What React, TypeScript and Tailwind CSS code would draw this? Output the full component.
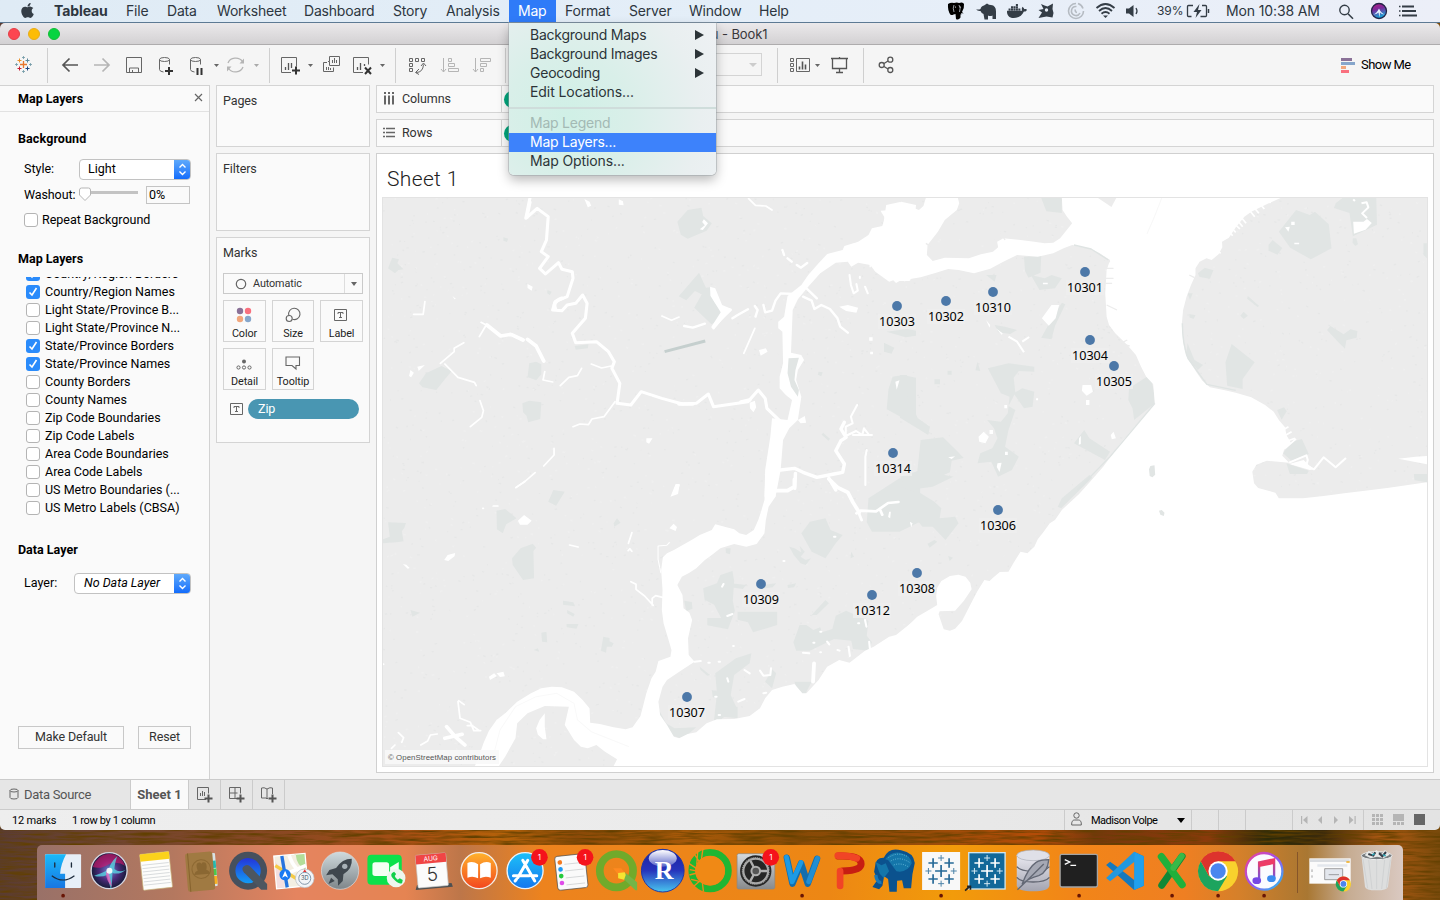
import React from "react";
import type { ReactNode } from "react";
import { FaApple, FaDocker } from "react-icons/fa";

/* ---------- shared helpers ---------- */

// A drawing cell whose coordinates are window coordinates.
function Cell({ x, w, y = 45, h = 39, children }: { x: number; w: number; y?: number; h?: number; children?: ReactNode }) {
  return (
    <svg className="block shrink-0" width={w} height={h} viewBox={`${x} ${y} ${w} ${h}`} fill="none">
      {children}
    </svg>
  );
}

const Caret = ({ x, c = "#666" }: { x: number; c?: string }) => <path d={`M${x} 64h5l-2.5 3z`} fill={c} />;
const Sep = ({ x }: { x: number }) => <path d={`M${x + 0.5} 48v35`} stroke="#cfcfcf" />;

/* ---------- menu bar ---------- */

const menus: [string, string][] = [
  ["File", "w-[41px]"],
  ["Data", "w-[50px]"],
  ["Worksheet", "w-[87px]"],
  ["Dashboard", "w-[89px]"],
  ["Story", "w-[53px]"],
  ["Analysis", "w-[63px]"],
];
const menusRight: [string, string][] = [
  ["Format", "w-[64px]"],
  ["Server", "w-[60px]"],
  ["Window", "w-[70px]"],
  ["Help", "w-[40px]"],
];

function MenuBar() {
  return (
    <div className="flex h-[23px] w-full items-center border-b border-[#5d7a94] bg-linear-to-r from-[#dfebf5] via-[#e4eef8] to-[#eceff8] text-[14px] leading-[22px] tracking-[-0.200px] whitespace-nowrap text-[#2d3640]">
      <div className="flex w-[54px] pl-[19px]">
        <FaApple className="mb-[2px] h-[17px] w-[17px] text-[#343d46]" />
      </div>
      <div className="w-[72px] font-bold tracking-[-0.100px]">Tableau</div>
      {menus.map(([t, w]) => (
        <div key={t} className={w}>{t}</div>
      ))}
      <div className="h-[22px] w-[47px] bg-[#2f7bf8] pl-[9px] text-white">Map</div>
      <div className="w-[9px]" />
      {menusRight.map(([t, w]) => (
        <div key={t} className={w}>{t}</div>
      ))}
      <div className="w-[146px]" />
      <Cell x={945} w={30} y={0} h={22}>
        <path d="M948 4q3-2 6-1 3-1 5 0 4-1.500 5 1 .5 4-2 8l1.500 1.500-3 1 0 3q-2 3-4.500 1.500l-.5-5-2 .5q-1.500 1-3 .2-3-4-2.500-10.700z" fill="#000" />
        <path d="M954 5q-1.500 3 0 7M959 5q2 3 .5 7M961 13.500h2" stroke="#dfe8f2" strokeWidth=".7" />
        <circle cx="955.500" cy="7" r=".6" fill="#fff" />
        <circle cx="960.500" cy="7" r=".6" fill="#fff" />
      </Cell>
      <Cell x={975} w={32} y={0} h={22}>
        <path d="M976 9q2 1 4.500 0 .5-3 3.500-3.500l3-2q2 1.500 4 1.500 5 .5 5 6.500v7.500h-3.500v-3.500q-2.500 1-4.500 0v4h-3.500l-1-5.500q-2-.5-3-3-3 .5-4.500-2z" fill="#343d46" />
      </Cell>
      <FaDocker className="h-[20px] w-[20px] text-[#343d46]" />
      <Cell x={1027} w={68} y={0} h={22}>
        <path d="M1041 4l3.500 1.500 3 1 5.500-3-.5 5.500 1 4-1 4.500-6-1-8 1.500 3.500-5.500-3.500-2.500 5-1z" fill="#343d46" />
        <circle cx="1046.500" cy="10" r="1.700" fill="#e8eef7" />
        <path d="M1076 3.500a7.500 7.500 0 1 0 7.500 7.500M1076.500 6.500a4.500 4.500 0 1 0 3.500 6.500M1078 3.500a8 8 0 0 1 5 5M1075.500 9.500a2 2 0 0 0 1.500 3" stroke="#b5bbc2" strokeWidth="1.600" />
      </Cell>
      <Cell x={1095} w={62} y={0} h={22}>
        <path d="M1096.500 8q9-8 18 0M1099 11q6.500-6 13 0M1101.500 13.800q4-3.500 8 0" stroke="#343d46" strokeWidth="1.800" />
        <path d="M1103 15.500h5l-2.500 2.600z" fill="#343d46" />
        <path d="M1126 8.500h3l4.500-3.500v12l-4.500-3.500h-3z" fill="#343d46" />
        <path d="M1136 8q2 3 0 6" stroke="#343d46" strokeWidth="1.300" />
      </Cell>
      <div className="w-[28px] text-[12px] tracking-[-0.100px]">39%</div>
      <Cell x={1185} w={41} y={0} h={22}>
        <path d="M1193 5.500h-4.500q-1 0-1 1v9q0 1 1 1h3M1202 5.500h3.500q1 0 1 1v9q0 1-1 1h-5" stroke="#343d46" strokeWidth="1.300" />
        <path d="M1199.500 4l-6 8h3.500l-1.500 6 6-8h-3.500z" fill="#343d46" />
        <path d="M1208.500 9v4" stroke="#343d46" strokeWidth="1.500" />
      </Cell>
      <div className="w-[112px] tracking-[-0.130px]">Mon 10:38 AM</div>
      <Cell x={1338} w={100} y={0} h={22}>
        <circle cx="1344.500" cy="10" r="4.700" stroke="#343d46" strokeWidth="1.400" />
        <path d="M1348 13.700l5 5" stroke="#343d46" strokeWidth="1.600" />
        <defs>
          <linearGradient id="siriM" x1="0" y1="0" x2="0.3" y2="1">
            <stop offset="0" stopColor="#c01c82" />
            <stop offset=".45" stopColor="#7a2a9a" />
            <stop offset="1" stopColor="#17a5d8" />
          </linearGradient>
        </defs>
        <circle cx="1379" cy="11" r="7.500" fill="url(#siriM)" stroke="#232348" strokeWidth="1.300" />
        <path d="M1373.500 14.500q3-1 5.500-6 2 4.500 5.500 6-3 0-4.500-2l-.5 5-1-5q-2 2-5 2z" fill="#e4f2ff" />
        <path d="M1399 6.500h1.500M1399 11h1.500M1399 15.500h1.500" stroke="#343d46" strokeWidth="1.600" />
        <path d="M1402 6.500h12M1402 11h14M1402 15.500h15" stroke="#343d46" strokeWidth="1.800" />
      </Cell>
    </div>
  );
}

/* ---------- toolbar ---------- */

const plusMark = (cx: number, cy: number) => <path d={`M${cx - 4} ${cy}h8M${cx} ${cy - 4}v8`} stroke="#333" strokeWidth="2" />;

function Toolbar() {
  return (
    <div className="flex h-[40px] w-full bg-[#f5f5f5] font-['Roboto',sans-serif]">
      <Cell x={0} w={56}>
        <path d="M20 64.500h7M23.500 61v7" stroke="#e8762c" strokeWidth="1.300" />
        <path d="M17.500 60.500h4M19.500 58.500v4" stroke="#eb912b" />
        <path d="M25.500 60.500h4M27.500 58.500v4" stroke="#5b879b" />
        <path d="M17.500 68.500h4M19.500 66.500v4" stroke="#c72035" />
        <path d="M25.500 68.500h4M27.500 66.500v4" stroke="#1f457e" />
        <path d="M22 57.500h3M23.500 56v3M22 71.500h3M23.500 70v3M15 64.500h3M16.500 63v3M29 64.500h3M30.500 63v3" stroke="#7199a6" strokeWidth=".8" />
        <Sep x={47} />
      </Cell>
      <Cell x={56} w={94}>
        <path d="M78 65H63.500M69.500 58.500L63 65l6.500 6.500" stroke="#555" strokeWidth="1.700" />
        <path d="M94 65h14.500M102.500 58.500L109 65l-6.500 6.500" stroke="#b5b5b5" strokeWidth="1.700" />
        <path d="M126.500 57.500h15v15h-15zM129.500 72v-4h9v4M132.500 72v-2" stroke="#666" />
      </Cell>
      <Cell x={150} w={70}>
        {[159.5, 190.5].map((x) => (
          <path key={x} d={`M${x} 59.500q0-2 5-2t5 2q0 2-5 2t-5-2v10q0 2 4 2.500M${x + 10} 59.500v5`} stroke="#666" />
        ))}
        {plusMark(169, 71)}
        <path d="M197.500 68v7M201.500 68v7" stroke="#333" strokeWidth="2" />
        <Caret x={214} />
      </Cell>
      <Cell x={220} w={50}>
        <path d="M228 63a8 7 0 0 1 14.500-1.500M243 67a8 7 0 0 1-14.500 1.500" stroke="#b5b5b5" strokeWidth="1.300" />
        <path d="M239.500 63.500h4.500v-5zM231.500 66.500h-4.500v5z" fill="#b5b5b5" />
        <Caret x={254} c="#aaa" />
        <Sep x={269} />
      </Cell>
      <Cell x={270} w={126}>
        <path d="M291 72.500h-9.500v-15h15v9" stroke="#666" />
        <path d="M285.500 70v-3M288.500 70v-7M291.500 68v-5" stroke="#555" strokeWidth="1.300" />
        {plusMark(296, 70.5)}
        <Caret x={308} />
        <path d="M328 61.500h1.500v-5h10v9h-10v-4M327 62.500h-3.500v9h10v-4M332.500 63v-3M334.500 63v-5M336.500 63v-3M326.500 70v-3M328.500 70v-3M330.500 70v-2" stroke="#666" />
        <path d="M363 72.500h-9.500v-15h15v7" stroke="#666" />
        <path d="M357.500 70v-3M360.500 70v-7M364.500 66v-2" stroke="#555" strokeWidth="1.300" />
        <path d="M365 67.500l6 6.500M371 67.500l-6 6.500" stroke="#333" strokeWidth="2" />
        <Caret x={380} />
        <Sep x={395} />
      </Cell>
      <Cell x={396} w={110}>
        <path d="M409.500 58.500h3v3h-3zM415.500 58.500h3v3h-3zM421.500 58.500h3v3h-3zM409.500 63.500h3v3h-3zM409.500 68.500h3v3h-3zM416 72.500q7 0 7.500-8M419 69l-3.500 3.500 3.500 2M421 66l2.500-3 2.500 3" stroke="#666" />
        <path d="M443.500 58v14M441 69l2.500 3 2.500-3M448.500 58.500h3v3h-3zM448.500 63.500h6v3h-6zM448.500 68.500h10v3h-10z" stroke="#b5b5b5" />
        <path d="M475.500 58v14M473 69l2.500 3 2.500-3M480.500 58.500h10v3h-10zM480.500 63.500h6v3h-6zM480.500 68.500h3v3h-3z" stroke="#b5b5b5" />
        <Sep x={505} />
      </Cell>
      <div className="w-[155px]" />
      <div className="mt-[8px] flex h-[23px] w-[101px] border border-[#d4d4d4]">
        <span className="ml-auto mt-[9px] mr-[4px] h-0 w-0 border-x-4 border-t-4 border-x-transparent border-t-[#ccc]" />
      </div>
      <Cell x={762} w={102}>
        <Sep x={777} />
        <path d="M790.500 58.500h3v3h-3zM790.500 63.500h3v3h-3zM790.500 68.500h3v3h-3zM796.500 58.500h13v13h-13z" stroke="#666" />
        <path d="M799.500 69.500v-3M802.500 69.500v-8M805.500 69.500v-5" stroke="#555" strokeWidth="1.600" />
        <Caret x={815} />
        <path d="M831 58.500h17M832.500 59v9.500h14V59M839.500 69v3M836 72.500h7M839.500 57v1" stroke="#555" strokeWidth="1.300" />
        <Sep x={863} />
      </Cell>
      <Cell x={864} w={40}>
        <path d="M884 63.500l4-2.500M884 66.500l4 2.500" stroke="#555" strokeWidth="1.300" />
        <circle cx="881.700" cy="65" r="2.500" stroke="#555" strokeWidth="1.300" />
        <circle cx="890.300" cy="59.700" r="2.500" stroke="#555" strokeWidth="1.300" />
        <circle cx="890.300" cy="70" r="2.500" stroke="#555" strokeWidth="1.300" />
      </Cell>
      <div className="ml-auto flex w-[99px] items-center text-[13px] tracking-[-0.550px] text-black">
        <span className="flex w-[20px] flex-col gap-px">
          <i className="h-[3px] w-[11px] bg-[#8a7197]" />
          <i className="h-[3px] w-[14px] bg-[#86a6cb]" />
          <i className="h-[3px] w-[5px] bg-[#f1a67c]" />
          <i className="h-[3px] w-[8px] bg-[#f9707e]" />
        </span>
        Show Me
      </div>
    </div>
  );
}

/* ---------- map layers panel ---------- */

const layers: [string, boolean][] = [
  ["Country/Region Borders", true],
  ["Country/Region Names", true],
  ["Light State/Province B...", false],
  ["Light State/Province N...", false],
  ["State/Province Borders", true],
  ["State/Province Names", true],
  ["County Borders", false],
  ["County Names", false],
  ["Zip Code Boundaries", false],
  ["Zip Code Labels", false],
  ["Area Code Boundaries", false],
  ["Area Code Labels", false],
  ["US Metro Boundaries (...", false],
  ["US Metro Labels (CBSA)", false],
];

function Check({ on }: { on: boolean }) {
  return on ? (
    <span className="flex h-[14px] w-[14px] items-center justify-center rounded-[3px] bg-[#2a8bfb]">
      <svg width="10" height="10" viewBox="0 0 10 10" fill="none">
        <path d="M1.500 5.500L4 8l4.500-7" stroke="#fff" strokeWidth="1.600" />
      </svg>
    </span>
  ) : (
    <span className="h-[14px] w-[14px] rounded-[3px] border border-[#b4b4b4] bg-white" />
  );
}

function Popup({ children, wide }: { children: ReactNode; wide?: boolean }) {
  return (
    <div className={`flex h-[21px] items-center overflow-hidden rounded-[4px] border border-[#c2c2c2] bg-white ${wide ? "w-[117px] pl-[9px]" : "w-[112px] pl-[8px]"}`}>
      <span className="grow">{children}</span>
      <span className="-my-px -mr-px flex h-[21px] w-[17px] items-center justify-center bg-linear-to-b from-[#62acfb] to-[#0c68fb]">
        <svg width="9" height="13" viewBox="0 0 9 13" fill="none">
          <path d="M1.500 4.500l3-3 3 3M1.500 8.500l3 3 3-3" stroke="#fff" strokeWidth="1.400" />
        </svg>
      </span>
    </div>
  );
}

function LayersPanel() {
  return (
    <div className="flex w-[210px] flex-col border-t border-r border-[#d2d2d2] bg-[#fafafa] text-[12.500px] leading-4 whitespace-nowrap text-black">
      <div className="flex h-[26px] items-center border-b border-[#e2e2e2] pl-[18px]">
        <b className="grow font-bold">Map Layers</b>
        <svg className="mr-[6px] mb-[2px]" width="9" height="9" viewBox="0 0 9 9">
          <path d="M1 1l7 7M8 1L1 8" stroke="#666" strokeWidth="1.200" />
        </svg>
      </div>
      <b className="mt-[19px] h-4 pl-[18px] tracking-[0.100px]">Background</b>
      <div className="mt-[11px] flex h-[22px] items-center pl-[24px]">
        <span className="w-[55px]">Style:</span>
        <Popup>Light</Popup>
      </div>
      <div className="mt-[5px] flex h-[20px] items-center pl-[24px]">
        <span className="w-[55px] tracking-[-0.100px]">Washout:</span>
        <svg width="60" height="16" viewBox="0 0 60 16">
          <path d="M8 5.500h51" stroke="#c3c3c3" strokeWidth="3" />
          <path d="M.5 3q0-2 2-2h7q2 0 2 2v5L6 13.500.5 8z" fill="#fff" stroke="#b5b5b5" />
        </svg>
        <span className="ml-[7px] h-[18px] w-[44px] border border-[#c4c4c4] pl-[2px]">0%</span>
      </div>
      <div className="mt-[6px] flex h-[18px] items-center gap-[4px] pl-[24px]">
        <Check on={false} />
        Repeat Background
      </div>
      <b className="mt-[22px] h-4 pl-[18px]">Map Layers</b>
      <div className="mt-[10px] h-[240px] overflow-hidden">
        <div className="-mt-[12px] pl-[26px]">
          {layers.map(([t, on]) => (
            <div key={t} className="flex h-[18px] items-center gap-[5px]">
              <Check on={on} />
              {t}
            </div>
          ))}
        </div>
      </div>
      <b className="mt-[25px] h-4 pl-[18px]">Data Layer</b>
      <div className="mt-[14px] flex h-[22px] items-center pl-[24px]">
        <span className="w-[50px]">Layer:</span>
        <Popup wide>
          <i>No Data Layer</i>
        </Popup>
      </div>
      <div className="mt-[132px] flex gap-[14px] pl-[18px] leading-[20px] tracking-[-0.150px] text-[#333]">
        <div className="h-[23px] w-[106px] border border-[#c8c8c8] text-center">Make Default</div>
        <div className="h-[23px] w-[53px] border border-[#c8c8c8] text-center">Reset</div>
      </div>
    </div>
  );
}

/* ---------- marks ---------- */

function TBox() {
  return (
    <svg width="13" height="12" viewBox="0 0 13 12" fill="none">
      <path d="M.5.500h12v11H.5zM4 5V3.500h5V5M6.500 3.500v5M5 8.500h3" stroke="#666" />
    </svg>
  );
}

function MarkButton({ label, children }: { label: string; children: ReactNode }) {
  return (
    <div className="flex h-[42px] w-full flex-col items-center border border-[#d4d4d4] bg-[#fafafa] text-[10.800px] leading-3 text-[#222]">
      <div className="flex h-[27px] items-center">{children}</div>
      {label}
    </div>
  );
}

function Cards() {
  return (
    <div className="ml-[6px] flex w-[154px] flex-col gap-[6px] text-[12.500px] leading-4 tracking-[-0.100px] text-[#333]">
      <div className="h-[62px] border border-[#d4d4d4] bg-[#fafafa] pt-[7px] pl-[6px]">Pages</div>
      <div className="h-[78px] border border-[#d4d4d4] bg-[#fafafa] pt-[7px] pl-[6px]">Filters</div>
      <div className="h-[206px] border border-[#d4d4d4] bg-[#fafafa] px-[6px] pt-[7px]">
        Marks
        <div className="mt-[12px] flex h-[21px] w-[140px] items-center border border-[#cacaca] text-[10.800px] leading-[19px]">
          <svg className="ml-[11px]" width="12" height="12" viewBox="0 0 12 12">
            <circle cx="6" cy="6" r="4.700" fill="none" stroke="#666" strokeWidth="1.200" />
          </svg>
          <span className="ml-[6px] grow pb-px">Automatic</span>
          <span className="flex h-full w-[18px] items-center justify-center border-l border-[#ddd]">
            <i className="h-0 w-0 border-x-[3.500px] border-t-4 border-x-transparent border-t-[#666]" />
          </span>
        </div>
        <div className="mt-[6px] grid w-[140px] grid-cols-[43px_42px_43px] gap-[6px]">
          <MarkButton label="Color">
            <svg className="-ml-[2px]" width="16" height="16" viewBox="0 0 16 16">
              <circle cx="4" cy="4" r="3.200" fill="#8a7197" />
              <circle cx="12" cy="4" r="3.200" fill="#f9707e" />
              <circle cx="4" cy="12" r="3.200" fill="#f1a67c" />
              <circle cx="12" cy="12" r="3.200" fill="#86a6cb" />
            </svg>
          </MarkButton>
          <MarkButton label="Size">
            <svg width="16" height="16" viewBox="0 0 16 16" fill="none" stroke="#666" strokeWidth="1.100">
              <path d="M3.800 8.300A5.700 5.700 0 1 1 7.500 12.300" />
              <circle cx="4.200" cy="11.500" r="3" />
            </svg>
          </MarkButton>
          <MarkButton label="Label">
            <span className="-ml-[2px]"><TBox /></span>
          </MarkButton>
          <MarkButton label="Detail">
            <svg className="mt-1 -ml-px" width="16" height="12" viewBox="0 0 16 12" fill="none" stroke="#666">
              <circle cx="8" cy="2.500" r="2" fill="#666" stroke="none" />
              <circle cx="2.500" cy="8.500" r="1.600" />
              <circle cx="8" cy="8.500" r="1.600" />
              <circle cx="13.500" cy="8.500" r="1.600" />
            </svg>
          </MarkButton>
          <MarkButton label="Tooltip">
            <svg className="mt-px" width="16" height="15" viewBox="0 0 16 15" fill="none" stroke="#666" strokeWidth="1.100">
              <path d="M1 1h13.500v8.500h-3.500v3.500l-4-3.500H1z" />
            </svg>
          </MarkButton>
        </div>
        <div className="mt-[9px] flex items-center pl-[7px]">
          <TBox />
          <span className="ml-[5px] h-[20px] w-[111px] rounded-full bg-[#4996b2] pl-[10px] leading-[19px] text-white">Zip</span>
        </div>
      </div>
    </div>
  );
}

/* ---------- map ---------- */

function speckles(count: number, seed: number) {
  let s = seed;
  const next = () => {
    s = (s * 1103515245 + 12345) % 2147483648;
    return s / 2147483648;
  };
  let d = "";
  for (let i = 0; i < count; i++) {
    const x = 383 + next() * 1044;
    const y = 198 + next() * 568;
    d += `M${x.toFixed(1)} ${y.toFixed(1)}l${(next() * 2 + 0.5).toFixed(1)} ${(next() * 2 - 1).toFixed(1)}`;
  }
  return d;
}
const darkSpeck = speckles(2200, 7);
const lightSpeck = speckles(1500, 91);

const zips: [string, number, number][] = [
  ["10303", 897, 306],
  ["10302", 946, 301],
  ["10310", 993, 292],
  ["10301", 1085, 272],
  ["10304", 1090, 340],
  ["10305", 1114, 366],
  ["10314", 893, 453],
  ["10306", 998, 510],
  ["10308", 917, 573],
  ["10309", 761, 584],
  ["10312", 872, 595],
  ["10307", 687, 697],
];

// Map tiles are drawn on a finer grid than the view; one scale per axis.
const TILE = "scale(.34439 .33333)";

// Shorelines as point lists: upper bay with the open ocean, then the two banks of the kill.
const bay =
  "470,24 472,60 485,80 500,100 480,125 465,145 445,158 420,160 390,155 350,150 300,145 282,155 285,172 270,185 235,193 200,205 130,203 95,213 78,195 80,165 110,125 130,90 165,60 172,40 168,24 75,24 68,48 55,60 30,50 0,36 -40,45 -60,180 -30,262 0,272 60,262 100,250 140,237 170,240 215,250 262,236 300,215 340,195 400,200 445,190 475,175 500,165 520,170 550,175 580,190 610,210 600,240 596,310 600,380 607,405 625,430 660,465 685,495 700,530 715,560 735,582 740,640 690,700 640,760 590,830 552,875 520,912 480,950 470,960 450,990 435,1000 415,1028 400,1048 390,1070 370,1090 350,1085 330,1118 315,1145 290,1146 270,1163 260,1173 245,1170 225,1203 205,1243 180,1293 160,1316 145,1322 127,1318 112,1273 115,1264 160,1262 185,1233 208,1198 204,1178 190,1160 170,1154 145,1158 120,1173 108,1193 105,1218 108,1245 90,1256 50,1280 20,1311 0,1330 0,1760 1535,1760 1535,876 1490,883 1420,893 1350,902 1290,910 1230,918 1170,925 1100,925 1090,908 1040,894 1028,880 1023,845 1035,824 1065,812 1130,818 1110,797 1115,780 1135,758 1122,735 1118,712 1100,690 1085,665 1060,645 1020,622 975,608 940,600 900,592 878,572 860,545 842,515 830,495 822,455 818,405 822,360 832,320 845,285 858,255 858,235 870,215 890,205 905,210 925,193 936,172 935,155 955,143 975,112 1000,80 1020,65 1060,45 1105,24";

const killSouth =
  "1130,-3 1128,60 1118,95 1110,120 1097,150 1075,165 1055,160 1040,148 985,133 975,150 940,165 920,178 865,210 845,220 833,232 828,270 832,330 830,390 835,430 848,475 858,510 855,530 820,543 812,575 800,595 785,640 775,680 768,708 745,742 725,748 690,742 650,732 622,728 620,685 600,660 575,635 540,622 510,620 480,625 450,640 410,665 375,700 350,720 328,752 312,790 300,825 285,864 353,864 375,830 405,775 410,730 440,700 490,678 560,680 548,735 575,780 595,800 615,805 640,795 665,815 700,838 686,866 1568,866 1568,418 1540,440 1510,465 1490,470 1445,500 1420,512 1375,548 1345,540 1310,560 1285,600 1250,640 1238,640 1215,612 1180,620 1150,630 1130,655 1115,685 1085,708 1040,717 990,718 960,730 930,757 905,762 880,775 865,770 845,735 825,705 820,665 832,620 845,600 885,572 925,545 908,525 906,475 918,420 910,398 893,385 890,345 875,315 888,290 910,278 930,265 955,240 975,225 1000,205 1040,192 1075,200 1105,192 1128,160 1132,120 1140,80 1160,50 1162,-3";

function MapView() {
  return (
    <svg className="block" width="1044" height="568" viewBox="383 198 1044 568" strokeLinejoin="round">
      <rect x="383" y="198" width="1044" height="568" fill="#ececec" />
      <path d={darkSpeck} stroke="#e6e7e7" strokeWidth="1.300" fill="none" />
      <path d={lightSpeck} stroke="#efefef" strokeWidth="1.500" fill="none" />

      {/* parks, north-west */}
      <g transform={`translate(376 190) ${TILE}`} fill="#e1e5e4">
        <path d="M875 95L905 60l40-7 5 25 25 22-15 22-55 24-20-12zM938 248l20 45 18-2 10 50 18 20-8 30-22 12-50-50 22-40-20-10-25 28-22-12zM35 235l12-32 20 5-5 12 18 18-15 2-10 10zM125 580l20-30 45-22 30 15-20 25-25 32-40-8zM425 640l20-8 35 5-3 50-35 10-5-20-10-10zM445 520l20-5 15 8v30l-15 18-25-10zM577 468l40-5-2 12-35 4zM498 300l12 5-5 10-8-5zM370 142l14 4-4 10-10-4zM1482 425l60-8 26 5v15l-30 5zM1475 458l30 15-8 18-22-6zM1500 560l30-5 38 8v140l-40-20-45-25 5-60zM1285 545l12 2-4 12-10-5zM1298 728l20 18-4 6-20-18z" />
        <path d="M838 485l118-32" stroke="#c5cfce" strokeWidth="9" />
      </g>
      {/* parks, north-east */}
      <g transform={`translate(900 190) ${TILE}`} fill="#e1e5e4">
        <path d="M410 24l60 0 0 45-45-5zM360 200l50-2-2 50-35 15-10-20zM380 255l40 10 20-10 30 10-20 30-45 5zM470 338l10 5-30 65-10 40-30-5 30-55zM275 405l30 5 35 10-20 12-35-5zM255 535l60-15 75 10 0 15-45-2-15 20 5 45-20 40 20 12-20 60-10 50 40 30-20 40-40 20-20-45-40 5 8-30 35-15 15-30-10-30-20-25 40 5 20-25 5-50-25-10zM330 610l25-15 35 10-5 45-25 5zM0 555l20 0 2 70 30 60 35 25-5 25-82-52zM60 750l65-8 40 40 20 22-35 8-5 35-45 20-50-20zM535 720l15 25 60 40-15 25-90-50zM665 595l60-40 12 45 3 40-60 50-5-35-12-25zM250 255h30l-5 20zM100 568h16v15h-16zM138 542h12v12h-12zM225 515l8 28-14-2zM1100 125l50-65 40 15 15-10 40 38 8 72-60 33-60-35zM1265 40l20-16h98l2 80-70 35-10-70-45-15zM1070 165l12-15 28 24-14 20-26-12zM865 250l20-17 25 8-10 25-30-5zM963 462l67 55-35 50 0 30-45-10-5-70zM1010 318l33 30-5 3-30-25zM998 365l12 12-12 10-10-10zM1240 420l10-12 38 25 20-15 20 5-2 20-30 8-4 25-22-22zM1315 145h10l5 18-8 5-8-10zM1520 160l10 0 0 45-10-10zM835 310l15 0-8 20zM840 372l18 4-5 10-12-3zM835 460l20 50 25 15-15 15-35-40zM1095 660l20-8 8 12-15 25zM1112 790l25-35 30-8 20 45-50 20z" />
      </g>
      {/* parks, south-west */}
      <g transform={`translate(376 480) ${TILE}`} fill="#e1e5e4">
        <path d="M35 127l52 2-5 15-7 10 5 30-20 3-40 3v-12l20-8zM350 92l25-5 33 28-30 18-10 27-17-12zM500 65l15-35 33 5-25 42zM690 130l10-15 10 13-18 12zM395 235l25-30 35-14 10 12-8 10 2 82-32 5-30-45zM480 458l15-3 2 32-15-2zM660 470l18 4 0 10 12 6-5 10-15 0-2 18-15-6zM543 362l30 5 5 12-35-5zM555 390l22 12-4 8-18-10zM553 432l35 0-6 14-28-4zM100 390l28 8-22 12zM458 510l12-5 4 10zM1235 160l25-35 45-10 15 35 35 15-20 25-30 45-40-20zM1200 200l15 5 20 12-5-20 15 18-12 15 15 10 15-5-15 20-15-5-20-25zM950 325l40-15 10-25 35-12 5 30-4 60 6 30-20 55-60-12 0-22 40 0-20-40-28-15zM1050 395l115 0 0 40-70 22-15-30-30-8zM895 362l22 4 2 20-18 8zM1015 205l15 0-2 18-12-4zM1265 405l40-45 10 10-35 35zM1230 435l20 0 20 15 20-8 5 15 30-10 10-40 30-15 65 30-5 45 15 20-10 25-45-5-5-25-50-5-30 15-40 20-40 0-8-25zM985 580l60-45 45-15-5 30-45 35-10 60 20 45-45 25-5 35-20-15 10-95zM1150 568l12 12-12 45-20-20zM822 690l20 40 25 15 63-3-40 35-35-12-30-40zM975 630l20 5-5 20-12-3zM1430 55l90-60 60 0v130l-60 30-80 0-15-28zM1380 215l8 15-10 5zM1030 310l45 5-10 12-35-5zM1120 315l42-5-10 12-32 4zM1195 315l25-5-6 12-18 2zM940 560l30 25-8 2-20-18zM1015 680l35 0 0 35-40-5zM1215 605l50 0 -20 40-15 0z" />
      </g>
      {/* parks, south-east shore */}
      <g transform={`translate(900 480) ${TILE}`} fill="#e1e5e4">
        <path d="M0 20l60 20 40 25 20 20-5 30 45-5 10 20-38 50-37-40-30 0-30-40-35 10zM60 -30l95 20-60 30-70 10-25-40zM470 55l80-70 8 8-90 92-10-5zM100 180l8 5-22 18-6-12zM140 228l14 5-10 10z" />
      </g>

      {/* bay, ocean and Brooklyn shoreline */}
      <g transform={`translate(900 190) ${TILE}`}>
        <polygon fill="#fff" points={bay} />
        <path fill="#ececec" d="M575 24h53l-14 27z" />
        <path d="M1010 55l20 25M985 75l20 25M975 85l20 25M965 95l22 22M955 105l20 22M948 115l18 22M1022 45l20 25M1040 35l18 22M905 165l26 25M1064 24l12 15" stroke="#fff" strokeWidth="5" />
        <path d="M580 215h30M595 235h25M595 265h25M596 280h20M600 345l30 15M840 255l15 8M75 160l15 10M275 150l20-5M290 125l15 25M640 460l20-10M655 465l12 3" stroke="#ececec" strokeWidth="4" fill="none" />
        <path d="M1108 722l20-12M1112 740l25-15M1115 757l32-12M1118 775l32-28" stroke="#fff" strokeWidth="5" />
        <path d="M1130 818l50-22 4 14-4 16 22 12 28-36 35 30 30-28" stroke="#fff" strokeWidth="6" fill="none" />
        <path d="M1130 822l42-12 14 14 16 14-12 2z M1447 806l50-6 38-2v26z" fill="#fff" />
        <path d="M1122 820l65 22-5 10-50 0zM1492 852h40v25l-38-6z" fill="#e1e5e4" />
        <path d="M723 838l4-10 12-2 2 28-8 8-8-4zM752 962l8-2 8 8-2 10-10-4z" fill="#e1e5e4" />
        <path d="M820 400q0 60 16 105l55 78 84 18M740 640L610 800l-95 100M505 165l50 12 50 33" stroke="#dfe4e3" strokeWidth="4" fill="none" />
        <path d="M760 24Q740 80 717 132" stroke="#f8f8f8" strokeWidth="3" fill="none" />
        <path fill="#fff" d="M440 345l22 0-10 40-20 22-20-22zM1316 95l30 0 10-8 14 12-18 20-34 12zM1118 112l14-2-4 15zM1136 95h10v10h-10zM1145 158h14v5h-14zM530 585l25 0 5 20-18 12-14-15zM540 630h10v15h-10zM228 740l15-15 15 15-10 20-18-5zM260 720h10v12h-10zM283 820l12-2-6 28-8-15zM303 645h8v10h-8zM305 785h8v10h-8zM250 390l12 15-2 8zM278 415l20 15-2 5zM520 745l5-8v25l-6 2zM612 735l8-10 7 20-12 3zM140 802l20-3-10 8zM415 278h14v5h-14zM395 625h6v6h-6z" />
        <path d="M315 440l25 15 20 32M355 455l20-14M1340 40l15-3 5 15-18 18 14 14M1316 28l5 5" stroke="#fff" strokeWidth="6" fill="none" />
      </g>

      {/* Newark Bay, Arthur Kill and creeks */}
      <g transform={`translate(376 190) ${TILE}`}>
        <path
          fill="#fff"
          d="M1568 45L1525 35l-25 25-35 2 13 23-8 23-30 7-10 20-30 20-40 13-5 12-45 12-25 28-30 35-20 30-40 33-10 62-17 15v20l12 10 2 95-10 40v35l18 20 18 15-13 60-45-5-5 55-15 100-2 80h32l15-80 7-90 18-35 25-25 10-70-15-50 5-30 18-30-8-15-30-7 3-78 2-50 15-32 30-38 35-40 45-32 35-3 10 15 20-12 35 7 15 20 40 30 12-4 8 8 10-6 30 0z"
        />
        <path d="M1435 212v20M1450 220v22M1465 232v22M1482 240v26M1498 250v20M1515 255v18M1535 258v16M1550 255v16" stroke="#fff" strokeWidth="4" />
        <path fill="#e1e5e4" d="M1198 505l30-2-10 37-3 30 13 30-3 20-20-30-10-40z" />
        <g fill="none" stroke="#fff" strokeLinecap="round">
          <path strokeWidth="9" d="M447 24l-12 61 33-30 32 25-5 70-15 35 20 15-25 35 17 17 38-34 10 20 30 7 2 20-17 55-35 15-7 25 27 2 15-17 25-5 20-25 13 25-5 45-38 45 10 28 60-3 35 30 17 30-7 20 23 45-8 60 40 5 30-40 60 20 60 17 40-2 35-28 15 38 100-15 30-35 20 25 5 30 40 40" />
          <path strokeWidth="11" d="M520 355q-8-20 20-30M322 405l40 33 30-5 35 17M440 448l25 20 22 45M880 642l40 0M1060 636l25-6" />
          <path strokeWidth="5" d="M300 440l20-35-15-8M490 545l-5 25 28 6M187 520l40-35 0-10 28-17M200 522l38 40 48 15 5 10M535 587l25-25 25-5 12-22M625 522l30 12 28-6M302 632l10 30-5 20-33 28M572 710l20-8 25 2 10-17 35-7 32-45M517 775v20l-30 33M462 848l-28 25-28 20M142 335l-5 38-28 0M1082 26l20 20 30 2 18 12M1100 415l-32 75M830 378l28 13 22-10" />
          <path strokeWidth="7" d="M975 298l10 35 20 22 25 5-30 30-20 25M895 408l25 5 35-12M1035 385l12-8M1045 378l35-20M1100 348l8 12-6 20M1125 345l5 22 20-5 10-30 15-22 40 2M1240 320l25 12 8 25 20-12 25 12 22 28 8 25 22 18M1240 285l40 40M1180 180l5 15M1195 205l12 10M1222 225l12 8 18-14" />
          <path strokeWidth="10" d="M1175 840l40-5 25 12 40 15 50-10 25-5 5-25-25-40 15-30 15-10-15-25 10-20M1218 850l-2 45M1315 865l20 35" />
          <path strokeWidth="6" d="M1397 645l-18 35 5 20-20 10 0 28 30-15 18 12 5-20 15 20M1385 735l55 0M1425 780l-4 20v85M1375 255l4 30 8 25 12-8-4-20M1420 290l8 20M1405 260v4" />
        </g>
        <path fill="#fff" d="M445 24l-5 20-8 40 10 2 10-50zM605 27l15 8 5 12-10 5zM705 28l12 6 2 12-14-2zM940 118l15-12-8-10 5-8 12 12-15 20zM440 282l15 8-3 12-12-8zM222 318l10 8-4 2zM120 530l22-5-18 18zM100 540l10 8-8 14-6-4zM785 745l18 0-10 16-8-4zM1085 638l15-6 4 20-8 15-10-12zM1112 480l20-5 5 10-20 12zM1345 350l25-5 30 8-5 15-30-5zM1432 442h10v10h-10zM1435 485h8v8h-8zM1508 575l12-4-8 28zM1225 690l20-12 4 20-16 2zM970 290l15 5 20 50 28 12-52 60-8-5 28-45-30-50zM870 885l12 0-5 15h-12z" />
      </g>

      <g transform={`translate(376 480) ${TILE}`}>
        <polygon fill="#fff" points={killSouth} />
        <path d="M345 810l15-60 45-70 60-30 60-10 50 30 10 50 40 35 110 45" stroke="#f9f9f9" strokeWidth="3" fill="none" />
        <g fill="none" stroke="#fff" strokeLinecap="round">
          <path strokeWidth="11" d="M1160 32h35l20-12v-22M1315-3l25 25 30 15 15 30 18 30" />
          <path strokeWidth="8" d="M1395 100l12-8 45 2 35-25 30-3M1402 100l8 20M1465 92l5 12" />
          <path strokeWidth="5" d="M432 5l-25 17M743 158l-10 32M732 212l5-6 6 8M740 305l15 8v15l25 20 25 28M802 375v-20l10-8 20 5M562 195l25 6M310 85h2M340 78h14M238 665l6 50 30 12 10 25 20 0M240 662l16 12M65 758l15 15-5 14M130 795l20-12 8-18 20-3M300 752l-20-15-15 0M45 805l10-10M22 552v1" />
          <path strokeWidth="3" d="M852 188l-8 8-25 2 0 40 8 40" />
          <path strokeWidth="11" d="M1272 550l-3 55M205 740l25 30 28 25M200 775l50-12" />
          <path strokeWidth="6" d="M925 545l18-2M965 548h4M995 545h4M1070 570l15 10M1115 572l10 15 20-2 2-20M1020 595l3 10M985 650h4M1125 640l8-2M1052 665l18-8M995 705h4M1240 518l18 2M1290 517h2M1372 500l4 28M1340 510l6 2M1432 485l2 20M1310 485l6 8M1020 408l15-6M1330 170h4M1183 243h3M1005 320l4-8M1037 498h2M1270 488h3M1290 455h3M1420 420l4 20M1400 430h3" />
        </g>
        <path fill="#fff" d="M412 122l18-17 22 17-12 12h-22zM870 12l12 0-5 30-22 8zM852 145l12-14 10 10-4 12zM198 240l10-15 22-6-2 10-18 14zM328 590l15-10 8 8-20 12zM350 580l20-5 4 14-14 2zM465 745l10-25 15-20 0 40 5 38-10 0-15-14zM78 252l10 2 10 10-6 2zM1490 95l5 0-2 20-6-4zM1550 125l8 5-4 12z" />
      </g>

      {/* zip code marks */}
      <g fontFamily="'Noto Sans', sans-serif" fontSize="12.600" textAnchor="middle">
        {zips.map(([z, x, y]) => (
          <g key={z}>
            <rect x={x - 19} y={y + 8} width="38" height="15" fill="#efefef" opacity=".75" />
            <circle cx={x} cy={y} r="4.900" fill="#4c78a8" />
            <text x={x} y={y + 20} fill="#000">{z}</text>
          </g>
        ))}
      </g>
      <rect x="385" y="750" width="114" height="14" fill="#f8f8f8" opacity=".9" />
      <text x="388" y="760" fontFamily="'Liberation Sans', sans-serif" fontSize="7.800" fill="#555" textLength="108">© OpenStreetMap contributors</text>
    </svg>
  );
}

/* ---------- worksheet ---------- */

function Shelf({ name, rows }: { name: string; rows?: boolean }) {
  return (
    <div className="flex h-[28px] items-center border border-[#d4d4d4] bg-[#fafafa] text-[12.500px] text-[#333]">
      <svg className={rows ? "mb-[4px] ml-[6px]" : "mb-px ml-[6px]"} width="13" height="13" viewBox="0 0 13 13">
        {rows ? (
          <path d="M0 3.500h2M0 7.500h2M0 11.500h2M3 3.500h9M3 7.500h9M3 11.500h9" stroke="#666" strokeWidth="1.600" />
        ) : (
          <path d="M2 0v2M6 0v2M10 0v2M2 3.500v9M6 3.500v9M10 3.500v9" stroke="#666" strokeWidth="2" />
        )}
      </svg>
      <span className="ml-[6px] w-[99px] tracking-[-0.100px]">{name}</span>
      <span className="h-full border-l border-[#d4d4d4]" />
      <span className="ml-[2px] h-[17px] w-[190px] rounded-full bg-[#00a67c]" />
    </div>
  );
}

function Worksheet() {
  return (
    <div className="ml-[6px] flex w-[1058px] flex-col gap-[6px]">
      <Shelf name="Columns" />
      <Shelf name="Rows" rows />
      <div className="h-[620px] border border-[#d0d0d0] bg-white px-[5px]">
        <div className="h-[43px] pt-[11px] pl-[5px] text-[21px] leading-[28px] font-light tracking-[0.350px] text-[#222]">Sheet 1</div>
        <div className="h-[570px] w-[1046px] border border-[#e3e3e3]">
          <MapView />
        </div>
      </div>
    </div>
  );
}

/* ---------- bottom bars ---------- */

function SheetTabs() {
  return (
    <div className="flex h-[31px] border-y border-[#cbcbcb] bg-[#e6e6e6] text-[13px] tracking-[-0.300px] text-[#555]">
      <div className="flex w-[130px] items-center pl-[9px]">
        <svg className="mr-[5px] mb-[2px]" width="10" height="12" viewBox="0 0 10 12" fill="none">
          <path d="M1 2.500Q1 1 5 1t4 1.500v7Q9 11 5 11T1 9.500zM1 2.500Q1 4 5 4t4-1.500" stroke="#666" />
        </svg>
        Data Source
      </div>
      <div className="flex w-[59px] items-center justify-center border-x border-[#cbcbcb] bg-[#fafafa] font-bold tracking-normal">Sheet 1</div>
      {[
        "M9 12.500H.5V.500h11v6M3.500 9V6M5.500 9V4M7.500 9V5",
        "M8 11.500H.5V.500h11v6M.5 6h8M6 .5v11",
        "M6 2v9M6 2Q3 0 .5 1v10h5M6 2q3-2 5.500-1v6M5 11.500h2",
      ].map((d) => (
        <div key={d} className="flex w-[32px] items-center justify-center border-r border-[#cbcbcb]">
          <svg width="16" height="16" viewBox="0 0 16 16" fill="none">
            <path d={d} stroke="#666" />
            <path d="M7.500 11.500h8M11.500 7.500v8" stroke="#555" strokeWidth="2" />
          </svg>
        </div>
      ))}
    </div>
  );
}

function StatusBar() {
  return (
    <div className="flex h-[20px] items-center rounded-b-[5px] bg-linear-to-r from-[#eeeeee] via-[#ebebeb] to-[#e3e3e3] text-[11px] tracking-[-0.350px] whitespace-nowrap text-black">
      <span className="w-[60px] pt-[2px] pl-[12px] tracking-[-0.200px]">12 marks</span>
      <span className="ml-[12px] pt-[2px]">1 row by 1 column</span>
      <div className="ml-auto flex h-full w-[128px] items-center border-x border-[#cbcbcb] pl-[6px]">
        <svg className="mb-[2px]" width="11" height="14" viewBox="0 0 11 14" fill="none" stroke="#666">
          <circle cx="5.500" cy="3.500" r="2.700" />
          <path d="M.7 13q-.4-5 3-5h3.600q3.400 0 3 5z" />
        </svg>
        <span className="ml-[9px] w-[86px] pt-[2px] tracking-[-0.500px]">Madison Volpe</span>
        <i className="h-0 w-0 border-x-4 border-t-[5px] border-x-transparent border-t-black" />
      </div>
      <div className="h-full w-[27px] border-r border-[#cbcbcb]" />
      <div className="h-full w-[27px] border-r border-[#cbcbcb]" />
      <div className="h-full w-[47px] border-r border-[#cbcbcb]" />
      <Cell x={1293} w={70} y={810} h={20}>
        <path d="M1301 816v8h1.200v-8zM1307.500 816v8l-4.500-4zM1322 816v8l-4-4zM1334 816v8l4-4zM1349 816v8l4.500-4zM1354.500 816v8h1.200v-8z" fill="#b5b5b5" />
      </Cell>
      <div className="h-full border-l border-[#cbcbcb]" />
      <Cell x={1364} w={76} y={810} h={20}>
        {[0, 4, 8].map((dx) =>
          [0, 4, 8].map((dy) => <rect key={`${dx}-${dy}`} x={1372 + dx} y={814 + dy} width="3" height="3" fill="#b5b5b5" />)
        )}
        <path d="M1393 814h11v7h-11zM1393 822h3v3h-3zM1397 822h3v3h-3zM1401 822h3v3h-3z" fill="#b5b5b5" />
        <rect x="1414" y="814" width="11" height="11" fill="#666" />
      </Cell>
    </div>
  );
}

/* ---------- open menu ---------- */

function MapMenu() {
  const row = "flex h-[19px] items-center pl-[21px] pr-[12px] pb-[2px]";
  return (
    <div className="absolute top-[23px] left-[509px] h-[152px] w-[207px] overflow-hidden rounded-b-[5px] bg-[radial-gradient(circle_at_28%_62%,#d0f0e6_0%,#d9efe9_35%,#e9eff0_75%,#eef1f4_100%)] pt-[3px] text-[14px] tracking-[-0.240px] whitespace-nowrap text-[#2c3438] shadow-[0_0_0_1px_rgba(150,160,165,0.45),0_5px_12px_rgba(0,0,0,0.28)]">
      {["Background Maps", "Background Images", "Geocoding"].map((t) => (
        <div key={t} className={row}>
          <span className="grow">{t}</span>
          <i className="h-0 w-0 border-y-[5px] border-l-[9px] border-y-transparent border-l-[#2c3438]" />
        </div>
      ))}
      <div className={`${row} tracking-[-0.080px]`}>Edit Locations...</div>
      <div className="mt-[5px] mb-[5px] h-[2px] bg-[#cfdddb]" />
      <div className={`${row} text-[#a3b9b4]`}>Map Legend</div>
      <div className={`${row} bg-[#3d82fb] text-white`}>Map Layers...</div>
      <div className={`${row} tracking-[-0.120px]`}>Map Options...</div>
    </div>
  );
}

/* ---------- dock ---------- */

// Every icon is drawn on a 138 x 165 board, centred on x = 69.
const Badge = ({ x }: { x: number }) => (
  <g>
    <circle cx={x} cy="37" r="25" fill="#f5131b" />
    <text x={x} y="45" textAnchor="middle" fontSize="24" fontFamily="Inter" fill="#fff">1</text>
  </g>
);
const cross = (x: number, y: number, r: number) => `M${x - r} ${y}h${2 * r}M${x} ${y - r}v${2 * r}`;
const tableauCrosses =
  [[45, 54], [93, 54], [45, 102], [93, 102]].map(([x, y]) => cross(x, y, 14)).join("") + cross(69, 78, 18);
const tableauSmall = [[69, 39], [69, 116], [31, 78], [107, 78]].map(([x, y]) => cross(x, y, 9)).join("");

const dockIcons: { name: string; dot?: boolean; art: ReactNode }[] = [
  {
    name: "finder",
    dot: true,
    art: (
      <>
        <rect x="15" y="28" width="108" height="101" rx="3" fill="#e7eff8" />
        <path d="M18 28h60q-16 30-18 58h15v43H15V31z" fill="url(#finderBlue)" />
        <path d="M44 54v12M94 54v12" stroke="#1d2b3c" strokeWidth="4" strokeLinecap="round" />
        <path d="M35 92q34 26 68 0" stroke="#1d2b3c" strokeWidth="3.500" fill="none" />
      </>
    ),
  },
  {
    name: "siri",
    art: (
      <>
        <circle cx="69" cy="77" r="54" fill="url(#siriBall)" stroke="#d6d6e2" strokeWidth="4" />
        <path d="M20 66q14-38 49-40 34 0 48 36-22-14-46-6-26 18-51 10z" fill="#d8186c" opacity=".6" />
        <path d="M24 92q24-8 44-18 4-20 25-40-8 26-8 38 14 12 34 2-18 16-40 10 0 26-4 50-8-25-12-44-20 8-39 2z" fill="#58dfe8" opacity=".75" />
        <path d="M66 76q6 24 12 50-20-22-18-44z" fill="#ff58bc" opacity=".7" />
        <circle cx="70" cy="77" r="9" fill="#fff" opacity=".9" />
      </>
    ),
  },
  {
    name: "notes",
    art: (
      <g transform="rotate(-6 69 78)">
        <rect x="28" y="24" width="88" height="108" rx="3" fill="#fdfdfb" stroke="#c8b47a" strokeWidth="2" />
        <path d="M28 24h88v22H28z" fill="#fbd21c" />
        <path d="M32 57h80M32 67h80M32 77h80M32 87h80M32 97h80M32 107h80M32 117h80" stroke="#c8ccd0" strokeWidth="2" />
      </g>
    ),
  },
  {
    name: "contacts",
    art: (
      <g transform="rotate(-5 69 78)">
        <rect x="94" y="27" width="18" height="100" rx="3" fill="#d8e2e4" />
        <path d="M96 50h16v22H96z" fill="#24b9b0" />
        <path d="M96 74h16v20H96z" fill="#4cc94c" />
        <path d="M96 96h16v24H96z" fill="#f7b022" />
        <rect x="22" y="22" width="82" height="115" rx="7" fill="#a07a42" />
        <path d="M30 22v115" stroke="#86632e" strokeWidth="3" />
        <circle cx="67" cy="72" r="28" fill="none" stroke="#8d6933" strokeWidth="3" />
        <path d="M44 88q4-11 12-12-7-24 6-24 9 0 5 12 0-12 9-12 12 0 6 24 8 1 10 12z" fill="#8a6732" />
      </g>
    ),
  },
  {
    name: "quicktime",
    art: (
      <>
        <circle cx="69" cy="77" r="57" fill="#46505d" />
        <circle cx="69" cy="77" r="38" fill="url(#qtBlue)" />
        <path d="M54 66q10-10 20-3l52 54v17h-18L56 82q-7-9-2-16z" fill="#4d5660" />
      </>
    ),
  },
  {
    name: "maps",
    art: (
      <>
        <g transform="rotate(-5 60 76)">
          <rect x="12" y="29" width="94" height="98" fill="#f3efe3" stroke="#fff" strokeWidth="4" />
          <path d="M48 31h30q0 34 26 46V31z" fill="#b3dd9a" />
          <path d="M58 31q12 50 48 60M14 95l92-30" stroke="#fff" strokeWidth="11" fill="none" />
          <path d="M14 46l22 24v56H14z" fill="#f4dfe0" />
          <path d="M14 58l88 65" stroke="#f5cb46" strokeWidth="10" />
          <path d="M36 31l8 95" stroke="#2674de" strokeWidth="10" />
        </g>
        <circle cx="42" cy="89" r="17" fill="#1a7af2" />
        <path d="M42 77l9 21-9-5-9 5z" fill="#fff" />
        <circle cx="101" cy="100" r="28" fill="#f2f5f8" stroke="#b6bcc2" strokeWidth="2" />
        <circle cx="101" cy="100" r="18" fill="none" stroke="#8397aa" strokeWidth="3" />
        <path d="M101 73l5 8h-10z" fill="#e43131" />
        <text x="101" y="106" textAnchor="middle" fontSize="17" fill="#456" fontFamily="Inter">3D</text>
      </>
    ),
  },
  {
    name: "launchpad",
    art: (
      <>
        <circle cx="69" cy="77" r="56" fill="url(#silver)" stroke="#d8e0e4" strokeWidth="2" />
        <path d="M104 41q-29 0-47 28l-20 6-10 16 19-3 16 15 1 19 14-14 2-20q28-18 25-47zM42 98l-8 19 19-9z" fill="#3f474e" />
        <circle cx="83" cy="64" r="8" fill="#a7b0b6" />
      </>
    ),
  },
  {
    name: "facetime",
    art: (
      <>
        <rect x="13" y="29" width="103" height="90" rx="12" fill="#0ce14b" />
        <rect x="28" y="52" width="50" height="41" rx="8" fill="#f2fff4" />
        <path d="M81 67l26-16v43L81 80z" fill="#f2fff4" />
        <circle cx="99" cy="99" r="28" fill="#eef6ef" />
        <path d="M87 84q-8 8 8 22t22 8l2-9-9-5-6 4q-8-6-9-11l4-6-6-7z" fill="#13cf4b" />
      </>
    ),
  },
  {
    name: "calendar",
    art: (
      <g transform="rotate(-5 69 78)">
        <path d="M17 116l104 3 3 11H12z" fill="#4e5051" />
        <rect x="20" y="27" width="91" height="98" rx="3" fill="#fbfbfb" stroke="#c6c6c6" strokeWidth="2" />
        <path d="M20 27h91v27H20z" fill="#f04545" />
        <text x="65" y="47" fontSize="20" textAnchor="middle" fontFamily="Inter" fill="#fff">AUG</text>
        <text x="66" y="107" fontSize="57" textAnchor="middle" fontFamily="Inter" fontWeight="300" fill="#333">5</text>
      </g>
    ),
  },
  {
    name: "books",
    art: (
      <>
        <circle cx="69" cy="77" r="54" fill="url(#booksO)" stroke="#f4eee8" strokeWidth="4" />
        <path d="M66 58Q50 47 34 54v44q17-7 32 2zM72 58q16-11 32-4v44q-17-7-32 2z" fill="#fff" />
      </>
    ),
  },
  {
    name: "app store",
    art: (
      <>
        <circle cx="69" cy="77" r="54" fill="url(#storeB)" stroke="#eaf4fc" strokeWidth="4" />
        <path d="M77 46L47 98M62 46l36 62M34 92h47M88 92h16M43 103l-4 5" stroke="#fff" strokeWidth="9" strokeLinecap="round" />
        <Badge x={112} />
      </>
    ),
  },
  {
    name: "reminders",
    art: (
      <>
        <g transform="rotate(-6 69 78)">
          <rect x="24" y="30" width="91" height="102" rx="8" fill="#fafafa" stroke="#43484c" strokeWidth="2" />
          <path d="M51 56h56M51 76h56M51 97h56M51 118h56" stroke="#c7c9cb" strokeWidth="2" />
          <circle cx="38" cy="49" r="7" fill="#f47a20" />
          <circle cx="38" cy="70" r="7" fill="#1f99f3" />
          <circle cx="38" cy="90" r="7" fill="#25ca3c" />
          <circle cx="38" cy="111" r="7" fill="#df4de9" />
        </g>
        <Badge x={111} />
      </>
    ),
  },
  {
    name: "qgis",
    art: (
      <>
        <circle cx="67" cy="77" r="50" fill="none" stroke="#70aa2b" strokeWidth="23" />
        <path d="M74 88l50 48h5V112L92 82z" fill="#73b548" />
        <path d="M57 70h24l14 16-22 4z" fill="#ff8a20" />
        <path d="M72 84l20-2 3 8-5 14-18-4z" fill="#f5e431" />
      </>
    ),
  },
  {
    name: "rstudio",
    art: (
      <>
        <circle cx="68" cy="77" r="64" fill="url(#rBlue)" stroke="#2237a4" strokeWidth="3" />
        <ellipse cx="68" cy="40" rx="42" ry="25" fill="url(#gloss)" />
        <text x="72" y="103" textAnchor="middle" fontFamily="'Liberation Serif'" fontSize="78" fontWeight="bold" fill="#fff">R</text>
      </>
    ),
  },
  {
    name: "anaconda",
    art: (
      <>
        <circle cx="69" cy="77" r="55" fill="none" stroke="#1fb633" strokeWidth="20" />
        <path d="M22 28l30 45M5 55l44 29M7 90l49-13M20 124l32-28M48 8L40 64M49 140l-5-44M8 74l47 9M12 103l37 9M32 18l-3 40" stroke="#f08b18" strokeWidth="4" />
        <circle cx="69" cy="77" r="44" fill="#f08915" />
      </>
    ),
  },
  {
    name: "preferences",
    art: (
      <>
        <rect x="12" y="26" width="113" height="106" rx="5" fill="url(#steel)" stroke="#888" strokeWidth="2" />
        <circle cx="68" cy="78" r="47" fill="#262626" />
        <circle cx="68" cy="78" r="38" fill="#262626" stroke="#a8a8a8" strokeWidth="8" />
        <circle cx="68" cy="78" r="42" stroke="#262626" strokeWidth="4" strokeDasharray="3 3" />
        <path d="M68 78l-16-31M68 78h35M68 78l-17 31" stroke="#b0b0b0" strokeWidth="7" />
        <circle cx="68" cy="78" r="13" stroke="#b0b0b0" strokeWidth="6" fill="#555" />
        <Badge x={113} />
      </>
    ),
  },
  {
    name: "word",
    dot: true,
    art: (
      <>
        <path d="M23 38l17 78 26-61 20 61 28-75" stroke="#126eae" strokeWidth="19" strokeLinejoin="round" strokeLinecap="round" fill="none" />
        <path d="M22 36l17 75 27-59" stroke="#1d9ae4" strokeWidth="14" strokeLinejoin="round" strokeLinecap="round" fill="none" />
        <path d="M89 110l26-70" stroke="#228ed2" strokeWidth="15" strokeLinecap="round" />
      </>
    ),
  },
  {
    name: "powerpoint",
    art: (
      <>
        <path d="M40 33q68-3 68 24 0 20-56 21" stroke="#c71e12" strokeWidth="21" strokeLinecap="round" fill="none" />
        <path d="M38 32q35-1 57 8M45 78v45" stroke="#f14426" strokeWidth="20" strokeLinecap="round" fill="none" />
      </>
    ),
  },
  {
    name: "postico",
    art: (
      <>
        <path d="M12 64Q13 37 38 38 54 5 90 16q38 7 41 38l-7 34-4 42H98l-5-24-15 1-1 33H55l-4-38-12-8-5 28-10 11-20-7 10-14 6-4-11-28z" fill="#0b528e" />
        <path d="M42 43Q61 17 90 24q31 9 32 31-14 30-46 24L51 45zM13 50l18 11 13-6 10 24-16 20-12-13z" fill="#1476aa" />
        <path d="M52 38q28-20 60-2M59 48q27-15 56 4M68 60q22-8 43 5" stroke="#67bbdb" strokeWidth="3" strokeDasharray="3 4" fill="none" />
        <path d="M14 90q3 24 17 22" stroke="#1a78b7" strokeWidth="10" fill="none" />
      </>
    ),
  },
  {
    name: "tableau",
    dot: true,
    art: (
      <>
        <rect x="12" y="21" width="114" height="114" fill="#f8f8f8" />
        <path d={tableauCrosses} stroke="#266997" strokeWidth="5" />
        <path d={tableauSmall} stroke="#4d83a8" strokeWidth="3" />
      </>
    ),
  },
  {
    name: "tableau public",
    art: (
      <>
        <rect x="14" y="23" width="109" height="109" fill="#126899" stroke="#d0e6ee" strokeWidth="4" />
        <path d={tableauCrosses} stroke="#fff" strokeWidth="5" />
        <path d={tableauSmall} stroke="#d3e8f2" strokeWidth="3" />
        <path d="M3 137l14-13m-8 0h10v10" stroke="#222" strokeWidth="5" fill="none" />
      </>
    ),
  },
  {
    name: "sqlite",
    art: (
      <>
        <path d="M20 31v91q3 17 49 17t49-17V31z" fill="url(#silver2)" />
        <path d="M20 65q12 14 49 14t49-14M20 97q12 14 49 14t49-14" stroke="#626672" strokeWidth="4" fill="none" />
        <ellipse cx="69" cy="31" rx="49" ry="16" fill="#dfe0e8" stroke="#a8aab5" strokeWidth="2" />
        <path d="M36 118q18-50 42-66 12-8 38-8-3 38-30 48-30 7-50 26zM22 134q16-14 79-77" stroke="#636875" strokeWidth="4" fill="#a5a8b4" />
      </>
    ),
  },
  {
    name: "terminal",
    dot: true,
    art: (
      <>
        <rect x="12" y="28" width="112" height="98" rx="5" fill="#202020" stroke="#a4a4a4" strokeWidth="4" />
        <path d="M26 44l15 7-15 7M43 61h17" stroke="#fff" strokeWidth="4" fill="none" />
      </>
    ),
  },
  {
    name: "vscode",
    art: (
      <>
        <path d="M96 20l29 14v88l-29 13-84-75 12-10 72 52z" fill="#1479bd" />
        <path d="M96 20v33L24 109 12 99z" fill="#2298df" />
        <path d="M96 20l29 14v88l-29 13z" fill="#20a0ed" />
        <path d="M62 78l34-27v54z" fill="#ef8120" />
      </>
    ),
  },
  {
    name: "excel",
    dot: true,
    art: (
      <>
        <path d="M99 34L38 121" stroke="#118836" strokeWidth="21" strokeLinecap="round" />
        <path d="M37 35l62 84" stroke="#20b03b" strokeWidth="22" strokeLinecap="round" />
        <path d="M98 33L73 69" stroke="#37b948" strokeWidth="18" strokeLinecap="round" />
      </>
    ),
  },
  { name: "chrome", dot: true, art: <Chrome /> },
  {
    name: "itunes",
    dot: true,
    art: (
      <>
        <circle cx="69" cy="79" r="55" fill="#fbfbff" stroke="url(#tunes)" strokeWidth="7" />
        <path d="M54 107V52l45-9v58" stroke="url(#noteG)" strokeWidth="7" fill="none" />
        <path d="M54 53l45-9v13l-45 9z" fill="#ee3c67" />
        <ellipse cx="47" cy="107" rx="13" ry="10" fill="#7648e5" />
        <ellipse cx="91" cy="101" rx="13" ry="10" fill="#3b8cf0" />
      </>
    ),
  },
];

function Chrome() {
  return (
    <g>
      <circle cx="69" cy="79" r="60" fill="#f9d12d" />
      <path d="M17 49A60 60 0 0 0 69 139L96 94 42 94z" fill="#1da45e" />
      <path d="M17 49a60 60 0 0 1 104 0H69L42 94z" fill="#dd332d" />
      <circle cx="69" cy="78" r="29" fill="#fff" />
      <circle cx="69" cy="78" r="23" fill="#4a86ef" />
    </g>
  );
}

const grads: { id: string; stops: string[]; x2?: number }[] = [
  { id: "finderBlue", stops: ["#19bafa", "#1876e2"] },
  { id: "qtBlue", stops: ["#2434d9", "#129cf5"] },
  { id: "silver", stops: ["#cfdadd", "#7e8589"] },
  { id: "booksO", stops: ["#ffb32c", "#f3461e"] },
  { id: "storeB", stops: ["#1cc1f8", "#1677ee"] },
  { id: "rBlue", stops: ["#1c1fa0", "#2635bc", "#48c6ef"] },
  { id: "gloss", stops: ["#ffffff", "#5a66c8"] },
  { id: "steel", stops: ["#d5dadf", "#888a8c"] },
  { id: "silver2", stops: ["#e8e8f0", "#a3a4b0"] },
  { id: "tunes", stops: ["#ef438b", "#9d51f1", "#20c5ef"], x2: 1 },
  { id: "noteG", stops: ["#ee3c67", "#6957e8"] },
];

function Dock() {
  return (
    <div className="relative ml-[37px] flex h-[55px] w-[1366px] items-start rounded-t-[5px] bg-[linear-gradient(90deg,#997168_0%,#b4785f_10%,#e5845f_19%,#e58452_27%,#bd7649_31%,#ed831e_37%,#ed8714_58%,#f29b0a_67%,#f28518_76%,#ef7f22_84%,#d5802a_88%,#a97732_93%,#c6ac92_96%,#dac9c1_100%)] pl-[3px]">
      <svg className="absolute" width="0" height="0">
        <defs>
          {grads.map((g) => (
            <linearGradient key={g.id} id={g.id} x1="0" y1="0" x2={g.x2 ?? 0} y2="1">
              {g.stops.map((c, i) => (
                <stop key={c} offset={i / (g.stops.length - 1)} stopColor={c} />
              ))}
            </linearGradient>
          ))}
          <radialGradient id="siriBall">
            <stop offset="0" stopColor="#6c80cd" />
            <stop offset=".55" stopColor="#4a2a78" />
            <stop offset="1" stopColor="#141b38" />
          </radialGradient>
        </defs>
      </svg>
      {dockIcons.map((ic) => (
        <svg key={ic.name} className="block shrink-0 overflow-visible" width="46.190" height="55" viewBox="0 0 138 165" fill="none">
          {ic.art}
          {ic.dot && <circle cx="69" cy="152" r="5.500" fill="#681505" />}
        </svg>
      ))}
      <div className="mt-[7px] ml-[10px] h-[41px] border-l border-[#86552a]" />
      <svg className="block overflow-visible" width="62" height="55" viewBox="0 0 186 165">
        <rect x="34" y="40" width="124" height="76" fill="#fbfbfb" />
        <path d="M36 43h119v8H36z" fill="#d9dce0" />
        <path d="M58 58h90v7H58zM80 71h54v33H80z" fill="#e3e7ed" />
        <path d="M80 71h54v33H80zM92 89h31M42 73v8M42 91v7" fill="none" stroke="#777" strokeWidth="2" />
        <path d="M145 51h10" stroke="#f1b12b" strokeWidth="5" />
        <g transform="translate(110 87) scale(.38)">
          <Chrome />
        </g>
      </svg>
      <svg className="block" width="34" height="55" viewBox="0 0 102 165">
        <path d="M4 29l11 96q1 11 34 11t35-11l12-96z" fill="#dddede" />
        <path d="M9 42l14 88M26 44l10 88M50 44v88M74 44l-9 88M91 44L79 130" stroke="#d0d2d3" strokeWidth="3" />
        <ellipse cx="50" cy="32" rx="46" ry="12" fill="#777b7e" stroke="#eee" strokeWidth="3" />
        <path d="M14 31l12-14 12 7 12-9 12 14 13-14 14 14-18 10-20-4-19 5z" fill="#e7e9e8" />
        <path d="M25 27l15 5 6-10M57 25l10 9 11-13" stroke="#343a45" strokeWidth="6" fill="none" />
        <path d="M36 30l8-4M69 29l8 4" stroke="#35a9b7" strokeWidth="5" />
      </svg>
    </div>
  );
}

/* ---------- desktop ---------- */

export default function App() {
  return (
    <div className="relative h-[900px] w-[1440px] overflow-hidden bg-[linear-gradient(90deg,#5a3c32_0%,#70452f_8%,#8b4822_20%,#a85012_29%,#b5620a_35%,#8c4a08_40%,#a85a09_48%,#864a06_55%,#954c09_63%,#b44c08_72%,#76380c_76%,#8a3a0b_84%,#2c2a08_88%,#3c2a0b_92%,#b05a12_96%,#794a0c_100%)] font-['Inter',sans-serif]">
      <svg className="absolute top-[826px] left-0" width="1440" height="74">
        <filter id="grain" x="0" y="0" width="100%" height="100%">
          <feTurbulence type="fractalNoise" baseFrequency=".03 .4" numOctaves="3" seed="4" />
          <feColorMatrix values="0 0 0 0 .12  0 0 0 0 .05  0 0 0 0 0  2.200 0 0 0 -.8" />
        </filter>
        <rect width="1440" height="74" filter="url(#grain)" />
      </svg>
      <div className="relative">
        <MenuBar />
        <div className="font-['Roboto',sans-serif]">
          <div className="flex h-[22px] items-center rounded-t-[5px] border-b border-[#aeacad] bg-linear-to-b from-[#ebe9eb] to-[#d3d1d3] pl-[8px] font-['Inter',sans-serif]">
            <span className="h-[12px] w-[12px] rounded-full border border-[#e43e46] bg-[#fc4650]" />
            <span className="ml-[8px] h-[12px] w-[12px] rounded-full border border-[#e8ac18] bg-[#fdbc05]" />
            <span className="ml-[8px] h-[12px] w-[12px] rounded-full border border-[#14bd36] bg-[#06d440]" />
            <span className="mr-[62px] grow pt-[2px] text-center text-[13px] tracking-[-0.100px] text-[#38363a]">Tableau - Book1</span>
          </div>
          <Toolbar />
          <div className="flex h-[694px] bg-[#f5f5f5]">
            <LayersPanel />
            <Cards />
            <Worksheet />
          </div>
          <SheetTabs />
          <StatusBar />
        </div>
        <div className="h-[15px]" />
        <Dock />
      </div>
      <MapMenu />
    </div>
  );
}
